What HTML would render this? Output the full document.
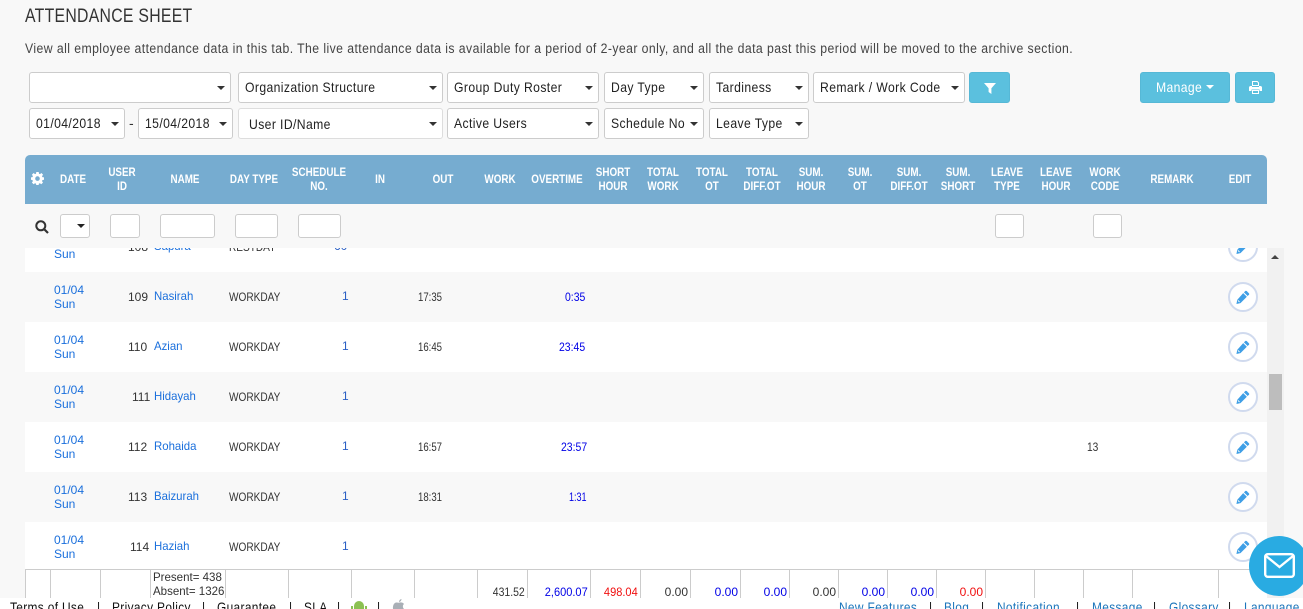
<!DOCTYPE html>
<html><head><meta charset="utf-8"><title>Attendance Sheet</title>
<style>
html,body{margin:0;padding:0;width:1303px;height:609px;overflow:hidden;background:#f8f8f8}
body{position:relative;font-family:"Liberation Sans",sans-serif;color:#333;font-size:13px}
.a{position:absolute}
.t{position:absolute;white-space:nowrap;line-height:14px;transform-origin:left center}
.s{position:absolute;box-sizing:border-box;height:31px;background:#fff;border:1px solid #ccc;border-radius:3px;font-size:14px;letter-spacing:.45px;line-height:29px;padding-left:6px;color:#222;white-space:nowrap}
.s span{display:inline-block;transform:scaleX(.87);transform-origin:left center}
.s:after{content:"";position:absolute;right:5px;top:13px;border:4px solid transparent;border-top:4px solid #333;border-bottom:0}
.b{position:absolute;box-sizing:border-box;height:31px;background:#5bc0de;border:1px solid #56b8d6;border-radius:3px;color:#fff}
.i{position:absolute;box-sizing:border-box;top:214px;height:24px;background:#fff;border:1px solid #ccc;border-radius:3px}
.h{position:absolute;width:80px;text-align:center;color:#fff;font-weight:bold;font-size:12px;line-height:14px;top:165px;transform:scaleX(.82)}
.h.o{top:172px}
.r{position:absolute;left:25px;width:1242px;height:50px}
.c{position:absolute;white-space:nowrap;font-size:12px;line-height:14px;transform-origin:left center}
.w{transform:scaleX(.84)}
.x{transform:scaleX(.8)}
.q{transform:scaleX(.95)}
.y{transform:scaleX(.87)}
.l{color:#1a6fdc}
.k{color:#2a5fc4}
.u{color:#0000e6}
.d{color:#333}
.v{position:absolute;top:569px;height:29px;width:1px;background:#ccc}
.f{position:absolute;top:585px;font-size:12px;line-height:14px;white-space:nowrap;text-align:right;transform:scaleX(.92);transform-origin:right center}
.z{transform:scaleX(1)}
.g{position:absolute;font-size:12px;line-height:14px;white-space:nowrap;transform:scaleX(.96);transform-origin:left center}
.e{position:absolute;left:1228px;width:26px;height:26px;border:2px solid #d0daee;border-radius:50%;background:#fff}
.e svg{position:absolute;left:6px;top:6px}
.m{position:absolute;top:599px;font-size:14px;letter-spacing:.4px;line-height:16px;white-space:nowrap;color:#111;transform:scaleX(.85);transform-origin:left center}
.n{color:#1b75bb}
</style></head>
<body>
<svg width="0" height="0" style="position:absolute"><defs><symbol id="p" viewBox="0 0 16 16"><path fill="#3f9fe6" d="M12.200 1.200l2.600 2.600c.5.5.5 1.100 0 1.600l-1.500 1.500-4.200-4.200 1.500-1.500c.5-.5 1.100-.5 1.600 0zM8.200 3.500l4.200 4.200-7.300 7.300-4.600 1 .9-4.700z"/><path fill="#fff" d="M2.600 11.600l1.800 1.800-.7.7-1.800-1.800z"/></symbol></defs></svg>

<div class="t" style="left:25px;top:9px;font-size:19.5px;letter-spacing:.35px;color:#333;transform:scaleX(.81)">ATTENDANCE SHEET</div>
<div class="t" style="left:25px;top:42px;font-size:13.5px;letter-spacing:.47px;color:#444;transform:scaleX(.907)">View all employee attendance data in this tab. The live attendance data is available for a period of 2-year only, and all the data past this period will be moved to the archive section.</div>

<div class="s" style="left:29px;top:72px;width:202px"></div>
<div class="s" style="left:238px;top:72px;width:205px"><span>Organization Structure</span></div>
<div class="s" style="left:447px;top:72px;width:152px"><span>Group Duty Roster</span></div>
<div class="s" style="left:604px;top:72px;width:100px"><span>Day Type</span></div>
<div class="s" style="left:709px;top:72px;width:100px"><span>Tardiness</span></div>
<div class="s" style="left:813px;top:72px;width:152px"><span>Remark / Work Code</span></div>
<div class="b" style="left:969px;top:72px;width:41px"><svg class="a" style="left:14px;top:9px" width="12" height="12" viewBox="0 0 12 12"><path fill="#fff" d="M0 1h12L7.400 6.200V12L4.600 10V6.200z"/></svg></div>
<div class="b" style="left:1140px;top:72px;width:90px;font-size:14px;line-height:29px;padding-left:15px;letter-spacing:.4px"><span style="display:inline-block;transform:scaleX(.87);transform-origin:left center">Manage</span><span class="a" style="left:65px;top:12px;border:4.500px solid transparent;border-top:4.500px solid #fff;border-bottom:0"></span></div>
<div class="b" style="left:1235px;top:72px;width:40px"><svg class="a" style="left:13px;top:8px" width="13" height="13" viewBox="0 0 13 13"><path fill="#fff" d="M3 0h5.500L10 1.500V5H3zM4 1v3h5V2L8 1zM1.500 5H3v1h7V5h1.500C12.300 5 13 5.700 13 6.500V10h-2.500V8.500h-8V10H0V6.500C0 5.700.7 5 1.500 5zM3 9h7v4H3zM4 10v2h5v-2z" fill-rule="evenodd"/></svg></div>

<div class="s" style="left:29px;top:108px;width:96px"><span>01/04/2018</span></div>
<div class="t" style="left:129px;top:116px;font-size:14px">-</div>
<div class="s" style="left:138px;top:108px;width:95px"><span>15/04/2018</span></div>
<div class="s" style="left:238px;top:108px;width:205px;padding-left:10px;line-height:31px;border-color:#ddd"><span>User ID/Name</span></div>
<div class="s" style="left:447px;top:108px;width:152px"><span>Active Users</span></div>
<div class="s" style="left:604px;top:108px;width:100px"><span>Schedule No</span></div>
<div class="s" style="left:709px;top:108px;width:100px"><span>Leave Type</span></div>

<div class="a" style="left:25px;top:155px;width:1242px;height:49px;background:#76acd0;border-radius:5px 5px 0 0"></div>
<svg class="a" style="left:31px;top:172px" width="13" height="13" viewBox="0 0 13 13"><path fill="#fff" fill-rule="evenodd" d="M5.300 0h2.400l.3 1.700 1 .4L10.400 1l1.700 1.700-1.100 1.400.4 1 1.600.3v2.400l-1.600.3-.4 1 1 1.400-1.700 1.700-1.400-1-1 .4-.3 1.700H5.300L5 11.600l-1-.4-1.400 1L.9 10.500l1-1.400-.4-1L0 7.800V5.400l1.500-.3.4-1L.9 2.700 2.600 1 4 2.100l1-.4zM6.500 4.300a2.300 2.300 0 1 0 0 4.600 2.300 2.300 0 0 0 0-4.600z"/></svg>
<div class="h o" style="left:33px">DATE</div>
<div class="h" style="left:82px">USER<br>ID</div>
<div class="h o" style="left:145px">NAME</div>
<div class="h o" style="left:214px">DAY TYPE</div>
<div class="h" style="left:279px">SCHEDULE<br>NO.</div>
<div class="h o" style="left:340px">IN</div>
<div class="h o" style="left:403px">OUT</div>
<div class="h o" style="left:460px">WORK</div>
<div class="h o" style="left:517px">OVERTIME</div>
<div class="h" style="left:573px">SHORT<br>HOUR</div>
<div class="h" style="left:623px">TOTAL<br>WORK</div>
<div class="h" style="left:672px">TOTAL<br>OT</div>
<div class="h" style="left:722px">TOTAL<br>DIFF.OT</div>
<div class="h" style="left:771px">SUM.<br>HOUR</div>
<div class="h" style="left:820px">SUM.<br>OT</div>
<div class="h" style="left:869px">SUM.<br>DIFF.OT</div>
<div class="h" style="left:918px">SUM.<br>SHORT</div>
<div class="h" style="left:967px">LEAVE<br>TYPE</div>
<div class="h" style="left:1016px">LEAVE<br>HOUR</div>
<div class="h" style="left:1065px">WORK<br>CODE</div>
<div class="h o" style="left:1132px">REMARK</div>
<div class="h o" style="left:1200px">EDIT</div>

<svg class="a" style="left:35px;top:220px" width="14" height="14" viewBox="0 0 14 14"><circle cx="5.800" cy="5.800" r="4.500" fill="none" stroke="#333" stroke-width="2"/><path d="M9 9l4 4" stroke="#333" stroke-width="2.200"/></svg>
<div class="i" style="left:60px;width:30px"><span class="a" style="left:16px;top:9px;border:4px solid transparent;border-top:4px solid #222;border-bottom:0"></span></div>
<div class="i" style="left:110px;width:30px"></div>
<div class="i" style="left:160px;width:55px"></div>
<div class="i" style="left:235px;width:43px"></div>
<div class="i" style="left:298px;width:43px"></div>
<div class="i" style="left:995px;width:29px"></div>
<div class="i" style="left:1093px;width:29px"></div>

<div class="a" style="left:1267px;top:248px;width:17px;height:350px;background:#f1f1f1"></div>
<div class="a" style="left:1271px;top:255px;border:4px solid transparent;border-bottom:4px solid #444;border-top:0"></div>
<div class="a" style="left:1269px;top:374px;width:13px;height:36px;background:#bdbdbd"></div>

<div class="a" style="left:25px;top:248px;width:1242px;height:24px;background:#fff;overflow:hidden">
<div class="c l" style="left:29px;top:-1px">Sun</div>
<div class="c" style="left:103px;top:-8px">108</div>
<div class="c l q" style="left:129px;top:-9px">Sapura</div>
<div class="c w" style="left:204px;top:-8px">RESTDAY</div>
<div class="c k" style="left:309px;top:-9px">60</div>
<div class="e" style="left:1203px;top:-16px"><svg width="14" height="14"><use href="#p"/></svg></div>
</div>

<div class="r" style="top:272px;background:#f8f8f8">
<div class="c l" style="left:29px;top:11px">01/04</div><div class="c l" style="left:29px;top:25px">Sun</div>
<div class="c" style="left:103px;top:18px">109</div><div class="c l q" style="left:129px;top:17px">Nasirah</div>
<div class="c w" style="left:204px;top:18px">WORKDAY</div><div class="c k" style="left:317px;top:17px">1</div>
<div class="c x" style="left:393px;top:18px">17:35</div><div class="c u y" style="left:540px;top:18px">0:35</div>
</div>
<div class="r" style="top:322px;background:#fff">
<div class="c l" style="left:29px;top:11px">01/04</div><div class="c l" style="left:29px;top:25px">Sun</div>
<div class="c" style="left:103px;top:18px">110</div><div class="c l q" style="left:129px;top:17px">Azian</div>
<div class="c w" style="left:204px;top:18px">WORKDAY</div><div class="c k" style="left:317px;top:17px">1</div>
<div class="c x" style="left:393px;top:18px">16:45</div><div class="c u y" style="left:534px;top:18px">23:45</div>
</div>
<div class="r" style="top:372px;background:#f8f8f8">
<div class="c l" style="left:29px;top:11px">01/04</div><div class="c l" style="left:29px;top:25px">Sun</div>
<div class="c" style="left:107px;top:18px">111</div><div class="c l q" style="left:129px;top:17px">Hidayah</div>
<div class="c w" style="left:204px;top:18px">WORKDAY</div><div class="c k" style="left:317px;top:17px">1</div>
</div>
<div class="r" style="top:422px;background:#fff">
<div class="c l" style="left:29px;top:11px">01/04</div><div class="c l" style="left:29px;top:25px">Sun</div>
<div class="c" style="left:103px;top:18px">112</div><div class="c l q" style="left:129px;top:17px">Rohaida</div>
<div class="c w" style="left:204px;top:18px">WORKDAY</div><div class="c k" style="left:317px;top:17px">1</div>
<div class="c x" style="left:393px;top:18px">16:57</div><div class="c u y" style="left:536px;top:18px">23:57</div>
<div class="c" style="left:1062px;top:18px;transform:scaleX(.85)">13</div>
</div>
<div class="r" style="top:472px;background:#f8f8f8">
<div class="c l" style="left:29px;top:11px">01/04</div><div class="c l" style="left:29px;top:25px">Sun</div>
<div class="c" style="left:103px;top:18px">113</div><div class="c l q" style="left:129px;top:17px">Baizurah</div>
<div class="c w" style="left:204px;top:18px">WORKDAY</div><div class="c k" style="left:317px;top:17px">1</div>
<div class="c x" style="left:393px;top:18px">18:31</div><div class="c u" style="left:544px;top:18px;transform:scaleX(.75)">1:31</div>
</div>
<div class="r" style="top:522px;height:47px;background:#fff">
<div class="c l" style="left:29px;top:11px">01/04</div><div class="c l" style="left:29px;top:25px">Sun</div>
<div class="c" style="left:105px;top:18px">114</div><div class="c l q" style="left:129px;top:17px">Haziah</div>
<div class="c w" style="left:204px;top:18px">WORKDAY</div><div class="c k" style="left:317px;top:17px">1</div>
</div>
<div class="e" style="top:282px"><svg width="14" height="14"><use href="#p"/></svg></div>
<div class="e" style="top:332px"><svg width="14" height="14"><use href="#p"/></svg></div>
<div class="e" style="top:382px"><svg width="14" height="14"><use href="#p"/></svg></div>
<div class="e" style="top:432px"><svg width="14" height="14"><use href="#p"/></svg></div>
<div class="e" style="top:482px"><svg width="14" height="14"><use href="#p"/></svg></div>
<div class="e" style="top:532px"><svg width="14" height="14"><use href="#p"/></svg></div>

<div class="a" style="left:25px;top:569px;width:1242px;height:29px;background:#fff;border-top:1px solid #ccc;box-sizing:border-box"></div>
<div class="v" style="left:25px"></div><div class="v" style="left:50px"></div><div class="v" style="left:100px"></div><div class="v" style="left:150px"></div><div class="v" style="left:225px"></div><div class="v" style="left:288px"></div><div class="v" style="left:351px"></div><div class="v" style="left:414px"></div><div class="v" style="left:477px"></div><div class="v" style="left:527px"></div><div class="v" style="left:590px"></div><div class="v" style="left:640px"></div><div class="v" style="left:690px"></div><div class="v" style="left:740px"></div><div class="v" style="left:789px"></div><div class="v" style="left:838px"></div><div class="v" style="left:887px"></div><div class="v" style="left:936px"></div><div class="v" style="left:985px"></div><div class="v" style="left:1034px"></div><div class="v" style="left:1083px"></div><div class="v" style="left:1132px"></div><div class="v" style="left:1218px"></div>
<div class="g" style="left:153px;top:570px">Present= 438</div>
<div class="g" style="left:153px;top:584px">Absent= 1326</div>
<div class="f" style="right:778px;transform:scaleX(.87)">431.52</div>
<div class="f u" style="right:715px">2,600.07</div>
<div class="f" style="right:665px;color:#f01010">498.04</div>
<div class="f z" style="right:615px">0.00</div>
<div class="f u z" style="right:565px">0.00</div>
<div class="f u z" style="right:516px">0.00</div>
<div class="f z" style="right:467px">0.00</div>
<div class="f u z" style="right:418px">0.00</div>
<div class="f u z" style="right:369px">0.00</div>
<div class="f z" style="right:320px;color:#f01010">0.00</div>

<div class="a" style="left:0;top:598px;width:1303px;height:11px;background:#fff"></div>
<div class="m" style="left:10px">Terms of Use</div>
<div class="m" style="left:97px">|</div>
<div class="m" style="left:112px">Privacy Policy</div>
<div class="m" style="left:202px">|</div>
<div class="m" style="left:217px">Guarantee</div>
<div class="m" style="left:289px">|</div>
<div class="m" style="left:304px">SLA</div>
<div class="m" style="left:337px">|</div>
<svg class="a" style="left:351px;top:600px" width="16" height="9" viewBox="0 0 16 9"><path fill="#8cc152" d="M3 6a5 5 0 0 1 10 0v3H3zM0 6h2v3H0zM14 6h2v3h-2z"/></svg>
<div class="m" style="left:377px">|</div>
<svg class="a" style="left:392px;top:599px" width="14" height="10" viewBox="0 0 14 10"><path fill="#a9afb6" d="M1 10C.5 6 2.500 3 5 3.500c1 .3 2 .3 3 0 1.500-.3 3 .2 4 1.500-1.500 1-1.500 3.500 0 5zM7 3c0-1.500 1-2.700 2.500-3 0 1.500-1 2.800-2.500 3z"/></svg>
<div class="m n" style="left:839px">New Features</div>
<div class="m" style="left:929px">|</div>
<div class="m n" style="left:944px">Blog</div>
<div class="m" style="left:981px">|</div>
<div class="m n" style="left:997px">Notification</div>
<div class="m" style="left:1076px">|</div>
<div class="m n" style="left:1092px">Message</div>
<div class="m" style="left:1153px">|</div>
<div class="m n" style="left:1169px">Glossary</div>
<div class="m" style="left:1228px">|</div>
<div class="m n" style="left:1244px">Language</div>

<div class="a" style="left:1249px;top:536px;width:60px;height:60px;border-radius:50%;background:#29abe2"></div>
<svg class="a" style="left:1264px;top:553px" width="31" height="25" viewBox="0 0 31 25"><rect x="1.200" y="1.200" width="28.600" height="22.600" rx="2.500" fill="none" stroke="#fff" stroke-width="2.400"/><path d="M2 3l13.500 11L29 3" fill="none" stroke="#fff" stroke-width="2.400"/></svg>
</body></html>
